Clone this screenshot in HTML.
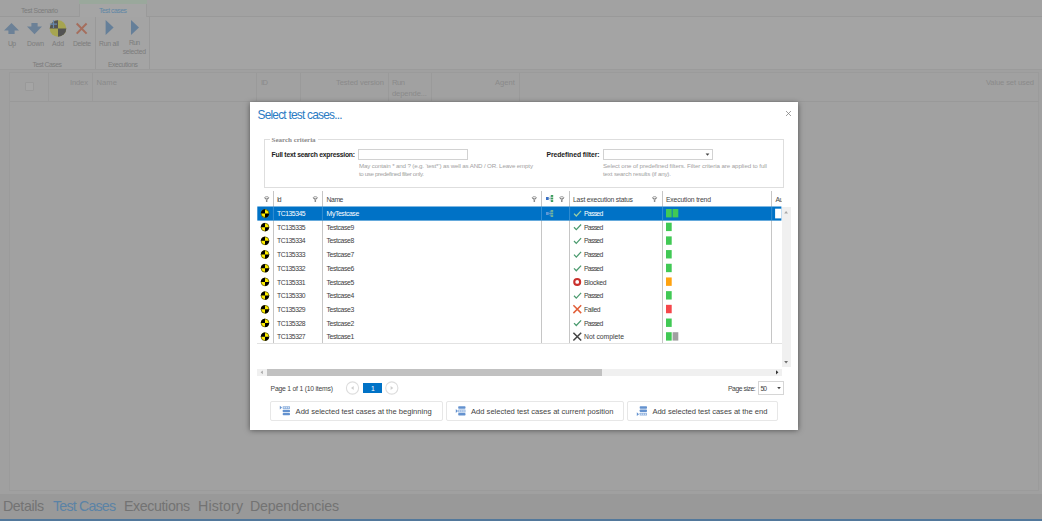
<!DOCTYPE html>
<html lang="en"><head><meta charset="utf-8"><title>Select test cases</title>
<style>
html,body{margin:0;padding:0;}
body{width:1042px;height:521px;overflow:hidden;background:#a0a0a0;position:relative;font-family:"Liberation Sans",sans-serif;}
#app,#modal,#mt{position:absolute;left:0;top:0;width:1042px;height:521px;overflow:hidden;}
.a{position:absolute;}
.t{position:absolute;white-space:nowrap;line-height:1;}
svg{position:absolute;overflow:visible;}

</style></head><body>
<div id="app">
<!-- top tab strip -->
<div class="a" style="left:0;top:0;width:1042px;height:16.5px;background:#a2a2a2"></div>
<div class="a" style="left:0;top:16px;width:1042px;height:1px;background:#999"></div>
<div class="a" style="left:79px;top:0;width:68px;height:17.2px;background:#a5a5a5;border-left:1px solid #9a9a9a;border-right:1px solid #9a9a9a;box-sizing:border-box"></div>
<div class="a" style="left:79px;top:0;width:68px;height:4px;background:#9aa89c"></div>
<!-- ribbon -->
<div class="a" style="left:0;top:17px;width:1042px;height:52px;background:#a4a4a4"></div>
<div class="a" style="left:0;top:69px;width:1042px;height:1px;background:#9b9b9b"></div>
<div class="a" style="left:95.2px;top:17px;width:0.8px;height:52px;background:#999"></div>
<div class="a" style="left:149px;top:17px;width:0.8px;height:52px;background:#999"></div>
<svg width="1042" height="521" viewBox="0 0 1042 521" style="left:0;top:0">
  <!-- up -->
  <path d="M11.5 23 L19 30.6 L14.6 30.6 L14.6 34 L8.4 34 L8.4 30.6 L4 30.6 Z" fill="#6c8197"/>
  <!-- down -->
  <path d="M31.4 23 L37.6 23 L37.6 26.6 L42 26.6 L34.5 34.2 L27 26.6 L31.4 26.6 Z" fill="#6c8197"/>
  <!-- add icon -->
  <circle cx="58" cy="28.5" r="8.3" fill="#a6a550"/>
  <path d="M58 28.5 L58 20.2 A8.3 8.3 0 0 0 49.7 28.5 Z" fill="#535353"/>
  <path d="M58 28.5 L58 36.8 A8.3 8.3 0 0 0 66.3 28.5 Z" fill="#535353"/>
  <path d="M53.5 20.2 V28 M49.9 24.2 H57" stroke="#6888aa" stroke-width="1.2" fill="none"/>
  <!-- delete -->
  <path d="M76.7 23.5 L86.6 33.6 M86.6 23.5 L76.7 33.6" stroke="#a56e5d" stroke-width="2" fill="none"/>
  <!-- play -->
  <path d="M105.6 20 L113.6 27.5 L105.6 35 Z" fill="#657f99"/>
  <path d="M131 20 L139 27.5 L131 35 Z" fill="#657f99"/>
</svg>
<!-- grid -->
<div class="a" style="left:9px;top:72.3px;width:1029.5px;height:418.7px;box-sizing:border-box;border:1px solid #9b9b9b;background:#a1a1a1"></div>
<div class="a" style="left:9.5px;top:100.8px;width:1029px;height:0.9px;background:#999"></div>
<div class="a" style="left:48px;top:73px;width:0.8px;height:28px;background:#9a9a9a"></div>
<div class="a" style="left:92px;top:73px;width:0.8px;height:28px;background:#9a9a9a"></div>
<div class="a" style="left:255.8px;top:73px;width:0.8px;height:28px;background:#9a9a9a"></div>
<div class="a" style="left:299.8px;top:73px;width:0.8px;height:28px;background:#9a9a9a"></div>
<div class="a" style="left:387.7px;top:73px;width:0.8px;height:28px;background:#9a9a9a"></div>
<div class="a" style="left:430.9px;top:73px;width:0.8px;height:28px;background:#9a9a9a"></div>
<div class="a" style="left:518.8px;top:73px;width:0.8px;height:28px;background:#9a9a9a"></div>
<div class="a" style="left:24.5px;top:82px;width:9px;height:8.6px;box-sizing:border-box;border:1px solid #999;border-radius:1px;background:#a5a5a5"></div>
<!-- bottom tabs -->
<div class="a" style="left:0;top:493.8px;width:1042px;height:25.2px;background:#999"></div>
<div class="a" style="left:0;top:518.8px;width:1042px;height:2.2px;background:#52789b"></div>

<span class="t" style='left:21.00px;top:8.00px;font-size:6.8px;color:#7c7c7c;font-family:"Liberation Sans", sans-serif;letter-spacing:-0.349px;'>Test Scenario</span>
<span class="t" style='left:99.00px;top:8.00px;font-size:6.8px;color:#5f86a6;font-family:"Liberation Sans", sans-serif;letter-spacing:-0.457px;'>Test cases</span>
<span class="t" style='left:8.00px;top:41.00px;font-size:6.8px;color:#7c7c7c;font-family:"Liberation Sans", sans-serif;letter-spacing:-0.703px;'>Up</span>
<span class="t" style='left:27.00px;top:41.00px;font-size:6.8px;color:#7c7c7c;font-family:"Liberation Sans", sans-serif;letter-spacing:-0.130px;'>Down</span>
<span class="t" style='left:52.00px;top:41.00px;font-size:6.8px;color:#7c7c7c;font-family:"Liberation Sans", sans-serif;letter-spacing:-0.047px;'>Add</span>
<span class="t" style='left:73.00px;top:41.00px;font-size:6.8px;color:#7c7c7c;font-family:"Liberation Sans", sans-serif;letter-spacing:-0.331px;'>Delete</span>
<span class="t" style='left:99.00px;top:41.00px;font-size:6.8px;color:#7c7c7c;font-family:"Liberation Sans", sans-serif;letter-spacing:-0.195px;'>Run all</span>
<span class="t" style='left:129.00px;top:40.00px;font-size:6.8px;color:#7c7c7c;font-family:"Liberation Sans", sans-serif;letter-spacing:-0.734px;'>Run</span>
<span class="t" style='left:122.70px;top:49.00px;font-size:6.8px;color:#7c7c7c;font-family:"Liberation Sans", sans-serif;letter-spacing:-0.290px;'>selected</span>
<span class="t" style='left:32.50px;top:62.00px;font-size:6.8px;color:#7c7c7c;font-family:"Liberation Sans", sans-serif;letter-spacing:-0.458px;'>Test Cases</span>
<span class="t" style='left:107.90px;top:62.00px;font-size:6.8px;color:#7c7c7c;font-family:"Liberation Sans", sans-serif;letter-spacing:-0.350px;'>Executions</span>
<span class="t" style='left:70.00px;top:79.00px;font-size:7.6px;color:#8a8a8a;font-family:"Liberation Sans", sans-serif;letter-spacing:-0.145px;'>Index</span>
<span class="t" style='left:96.50px;top:79.00px;font-size:7.6px;color:#8a8a8a;font-family:"Liberation Sans", sans-serif;letter-spacing:0.078px;'>Name</span>
<span class="t" style='left:261.00px;top:79.00px;font-size:7.6px;color:#8a8a8a;font-family:"Liberation Sans", sans-serif;letter-spacing:-0.594px;'>ID</span>
<span class="t" style='left:336.00px;top:79.00px;font-size:7.6px;color:#8a8a8a;font-family:"Liberation Sans", sans-serif;letter-spacing:-0.075px;'>Tested version</span>
<span class="t" style='left:392.00px;top:79.00px;font-size:7.6px;color:#8a8a8a;font-family:"Liberation Sans", sans-serif;letter-spacing:-0.469px;'>Run</span>
<span class="t" style='left:392.00px;top:90.00px;font-size:7.6px;color:#8a8a8a;font-family:"Liberation Sans", sans-serif;letter-spacing:-0.101px;'>depende...</span>
<span class="t" style='left:495.00px;top:79.00px;font-size:7.6px;color:#8a8a8a;font-family:"Liberation Sans", sans-serif;letter-spacing:0.035px;'>Agent</span>
<span class="t" style='left:986.00px;top:79.00px;font-size:7.6px;color:#8a8a8a;font-family:"Liberation Sans", sans-serif;letter-spacing:-0.130px;'>Value set used</span>
<span class="t" style='left:3.00px;top:499.00px;font-size:14.2px;color:#737373;font-family:"Liberation Sans", sans-serif;letter-spacing:-0.396px;'>Details</span>
<span class="t" style='left:53.00px;top:499.00px;font-size:14.2px;color:#5b83a6;font-family:"Liberation Sans", sans-serif;letter-spacing:-0.799px;'>Test Cases</span>
<span class="t" style='left:124.00px;top:499.00px;font-size:14.2px;color:#737373;font-family:"Liberation Sans", sans-serif;letter-spacing:-0.378px;'>Executions</span>
<span class="t" style='left:198.00px;top:499.00px;font-size:14.2px;color:#737373;font-family:"Liberation Sans", sans-serif;letter-spacing:0.141px;'>History</span>
<span class="t" style='left:250.00px;top:499.00px;font-size:14.2px;color:#737373;font-family:"Liberation Sans", sans-serif;letter-spacing:-0.156px;'>Dependencies</span>
</div>
<div id="modal">
<div class="a" style="left:250.3px;top:101.8px;width:547.4px;height:327.9px;background:#fff;box-shadow:0 1.2px 5.5px rgba(0,0,0,0.5)"></div>
<div class="a" style="left:264.2px;top:139.3px;width:519.6px;height:49px;box-sizing:border-box;border:1px solid #dedede"></div>
<div class="a" style="left:269.6px;top:136px;width:48px;height:7px;background:#fff"></div>
<div class="a" style="left:358.3px;top:149.2px;width:110px;height:11px;box-sizing:border-box;border:1px solid #d2d2d2;background:#fff"></div>
<div class="a" style="left:602.8px;top:149.2px;width:110px;height:11px;box-sizing:border-box;border:1px solid #d2d2d2;background:#fff"></div>
<div class="a" style="left:257.3px;top:343.1px;width:524.3px;height:0.8px;background:#e2e2e2"></div>
<div class="a" style="left:272.9px;top:190.6px;width:1px;height:152.6px;background:#c6c6c6"></div>
<div class="a" style="left:321.9px;top:190.6px;width:1px;height:152.6px;background:#c6c6c6"></div>
<div class="a" style="left:541.0px;top:190.6px;width:1px;height:152.6px;background:#c6c6c6"></div>
<div class="a" style="left:569.1px;top:190.6px;width:1px;height:152.6px;background:#c6c6c6"></div>
<div class="a" style="left:662.1px;top:190.6px;width:1px;height:152.6px;background:#c6c6c6"></div>
<div class="a" style="left:771.2px;top:190.6px;width:1px;height:152.6px;background:#c6c6c6"></div>
<div class="a" style="left:781.8px;top:206.7px;width:9px;height:160.7px;background:#f0f0f0"></div>
<div class="a" style="left:257.3px;top:368.7px;width:524.3px;height:7.3px;background:#f0f0f0"></div>
<div class="a" style="left:266.6px;top:368.7px;width:335.8px;height:7.3px;background:#c1c1c1"></div>
<div class="a" style="left:363px;top:383px;width:18.7px;height:9.8px;background:#0072c6"></div>
<div class="a" style="left:757.6px;top:381.4px;width:26.2px;height:13.2px;box-sizing:border-box;border:1px solid #d6d6d6;background:#fff"></div>
<div class="a" style="left:270.4px;top:401.3px;width:172.2px;height:19.3px;box-sizing:border-box;border:1px solid #e7e7e7;border-radius:2px;background:#fff"></div>
<div class="a" style="left:446.1px;top:401.3px;width:177.7px;height:19.3px;box-sizing:border-box;border:1px solid #e7e7e7;border-radius:2px;background:#fff"></div>
<div class="a" style="left:627.3px;top:401.3px;width:150.5px;height:19.3px;box-sizing:border-box;border:1px solid #e7e7e7;border-radius:2px;background:#fff"></div>
<svg width="1042" height="521" viewBox="0 0 1042 521" style="left:0;top:0">
<rect x="257.3" y="206.5" width="524.1" height="14.1" fill="#0072c6"/>
<rect x="272.9" y="206.5" width="1" height="14.1" fill="#fff" fill-opacity="0.2"/>
<rect x="321.9" y="206.5" width="1" height="14.1" fill="#fff" fill-opacity="0.2"/>
<rect x="541.0" y="206.5" width="1" height="14.1" fill="#fff" fill-opacity="0.2"/>
<rect x="569.1" y="206.5" width="1" height="14.1" fill="#fff" fill-opacity="0.2"/>
<rect x="662.1" y="206.5" width="1" height="14.1" fill="#fff" fill-opacity="0.2"/>
<rect x="771.2" y="206.5" width="1" height="14.1" fill="#fff" fill-opacity="0.2"/>
<rect x="775.1" y="208.7" width="6.3" height="9.7" fill="#fff"/>
<path d="M786 111 L791 116 M791 111 L786 116" stroke="#777" stroke-width="0.7" fill="none"/>
<path d="M705.6 153.6 L709.4 153.6 L707.5 155.8 Z" fill="#444"/>
<path d="M777.2 387 L780.8 387 L779 389.2 Z" fill="#444"/>
<g transform="translate(266.7 196.7)" stroke="#6e6e6e" stroke-width="0.7" fill="none"><ellipse cx="0" cy="1.0" rx="1.95" ry="1.0"/><path d="M-1.95 1.2 L-0.25 3.2 L-0.25 5.3 M1.95 1.2 L0.25 3.2 L0.25 5.3"/></g>
<g transform="translate(315.3 196.7)" stroke="#6e6e6e" stroke-width="0.7" fill="none"><ellipse cx="0" cy="1.0" rx="1.95" ry="1.0"/><path d="M-1.95 1.2 L-0.25 3.2 L-0.25 5.3 M1.95 1.2 L0.25 3.2 L0.25 5.3"/></g>
<g transform="translate(534.3 196.7)" stroke="#6e6e6e" stroke-width="0.7" fill="none"><ellipse cx="0" cy="1.0" rx="1.95" ry="1.0"/><path d="M-1.95 1.2 L-0.25 3.2 L-0.25 5.3 M1.95 1.2 L0.25 3.2 L0.25 5.3"/></g>
<g transform="translate(561.8 196.7)" stroke="#6e6e6e" stroke-width="0.7" fill="none"><ellipse cx="0" cy="1.0" rx="1.95" ry="1.0"/><path d="M-1.95 1.2 L-0.25 3.2 L-0.25 5.3 M1.95 1.2 L0.25 3.2 L0.25 5.3"/></g>
<g transform="translate(654.6 196.7)" stroke="#6e6e6e" stroke-width="0.7" fill="none"><ellipse cx="0" cy="1.0" rx="1.95" ry="1.0"/><path d="M-1.95 1.2 L-0.25 3.2 L-0.25 5.3 M1.95 1.2 L0.25 3.2 L0.25 5.3"/></g>
<g transform="translate(546 195)"><path d="M2.6 3.5 H5.4 M4.2 0.9 V6.1 M4.2 0.9 H5.4 M4.2 6.1 H5.4" stroke="#88aaaa" stroke-width="0.6" fill="none"/><rect x="0" y="2" width="2.7" height="3" fill="#3a6fc4"/><rect x="5" y="0" width="2.2" height="1.9" fill="#3c9d5c"/><rect x="5" y="2.55" width="2.2" height="1.9" fill="#3c9d5c"/><rect x="5" y="5.1" width="2.2" height="1.9" fill="#3c9d5c"/></g>
<g transform="translate(546 210)"><path d="M2.6 3.5 H5.4 M4.2 0.9 V6.1 M4.2 0.9 H5.4 M4.2 6.1 H5.4" stroke="#7fa8c8" stroke-width="0.6" fill="none"/><rect x="0" y="2" width="2.7" height="3" fill="#5f98d6"/><rect x="5" y="0" width="2.2" height="1.9" fill="#6fb39a"/><rect x="5" y="2.55" width="2.2" height="1.9" fill="#6fb39a"/><rect x="5" y="5.1" width="2.2" height="1.9" fill="#6fb39a"/></g>
<g transform="translate(265 213.45)"><circle r="4.15" fill="#ffee00"/><path d="M0 0 L0 -4.15 A4.15 4.15 0 0 0 -4.15 0 Z M0 0 L0 4.15 A4.15 4.15 0 0 0 4.15 0 Z" fill="#000"/><circle r="3.95" fill="none" stroke="#000" stroke-width="0.5"/></g>
<g transform="translate(265 227.14)"><circle r="4.15" fill="#ffee00"/><path d="M0 0 L0 -4.15 A4.15 4.15 0 0 0 -4.15 0 Z M0 0 L0 4.15 A4.15 4.15 0 0 0 4.15 0 Z" fill="#000"/><circle r="3.95" fill="none" stroke="#000" stroke-width="0.5"/></g>
<g transform="translate(265 240.83)"><circle r="4.15" fill="#ffee00"/><path d="M0 0 L0 -4.15 A4.15 4.15 0 0 0 -4.15 0 Z M0 0 L0 4.15 A4.15 4.15 0 0 0 4.15 0 Z" fill="#000"/><circle r="3.95" fill="none" stroke="#000" stroke-width="0.5"/></g>
<g transform="translate(265 254.52)"><circle r="4.15" fill="#ffee00"/><path d="M0 0 L0 -4.15 A4.15 4.15 0 0 0 -4.15 0 Z M0 0 L0 4.15 A4.15 4.15 0 0 0 4.15 0 Z" fill="#000"/><circle r="3.95" fill="none" stroke="#000" stroke-width="0.5"/></g>
<g transform="translate(265 268.21)"><circle r="4.15" fill="#ffee00"/><path d="M0 0 L0 -4.15 A4.15 4.15 0 0 0 -4.15 0 Z M0 0 L0 4.15 A4.15 4.15 0 0 0 4.15 0 Z" fill="#000"/><circle r="3.95" fill="none" stroke="#000" stroke-width="0.5"/></g>
<g transform="translate(265 281.90)"><circle r="4.15" fill="#ffee00"/><path d="M0 0 L0 -4.15 A4.15 4.15 0 0 0 -4.15 0 Z M0 0 L0 4.15 A4.15 4.15 0 0 0 4.15 0 Z" fill="#000"/><circle r="3.95" fill="none" stroke="#000" stroke-width="0.5"/></g>
<g transform="translate(265 295.59)"><circle r="4.15" fill="#ffee00"/><path d="M0 0 L0 -4.15 A4.15 4.15 0 0 0 -4.15 0 Z M0 0 L0 4.15 A4.15 4.15 0 0 0 4.15 0 Z" fill="#000"/><circle r="3.95" fill="none" stroke="#000" stroke-width="0.5"/></g>
<g transform="translate(265 309.28)"><circle r="4.15" fill="#ffee00"/><path d="M0 0 L0 -4.15 A4.15 4.15 0 0 0 -4.15 0 Z M0 0 L0 4.15 A4.15 4.15 0 0 0 4.15 0 Z" fill="#000"/><circle r="3.95" fill="none" stroke="#000" stroke-width="0.5"/></g>
<g transform="translate(265 322.97)"><circle r="4.15" fill="#ffee00"/><path d="M0 0 L0 -4.15 A4.15 4.15 0 0 0 -4.15 0 Z M0 0 L0 4.15 A4.15 4.15 0 0 0 4.15 0 Z" fill="#000"/><circle r="3.95" fill="none" stroke="#000" stroke-width="0.5"/></g>
<g transform="translate(265 336.66)"><circle r="4.15" fill="#ffee00"/><path d="M0 0 L0 -4.15 A4.15 4.15 0 0 0 -4.15 0 Z M0 0 L0 4.15 A4.15 4.15 0 0 0 4.15 0 Z" fill="#000"/><circle r="3.95" fill="none" stroke="#000" stroke-width="0.5"/></g>
<path d="M574 213.60 L576.3 216.00 L581.1 210.80" stroke="#9ccfa4" stroke-width="1.25" fill="none"/>
<path d="M574 227.29 L576.3 229.69 L581.1 224.49" stroke="#4a9a6e" stroke-width="1.25" fill="none"/>
<path d="M574 240.98 L576.3 243.38 L581.1 238.18" stroke="#4a9a6e" stroke-width="1.25" fill="none"/>
<path d="M574 254.67 L576.3 257.07 L581.1 251.87" stroke="#4a9a6e" stroke-width="1.25" fill="none"/>
<path d="M574 268.36 L576.3 270.76 L581.1 265.56" stroke="#4a9a6e" stroke-width="1.25" fill="none"/>
<circle cx="577.2" cy="281.95" r="2.95" fill="#fff" stroke="#c9302c" stroke-width="2.1"/>
<path d="M574 295.74 L576.3 298.14 L581.1 292.94" stroke="#4a9a6e" stroke-width="1.25" fill="none"/>
<path d="M573.4 305.33 L581.2 313.13 M581.2 305.33 L573.4 313.13" stroke="#e2603a" stroke-width="1.5" fill="none"/>
<path d="M574 323.12 L576.3 325.52 L581.1 320.32" stroke="#4a9a6e" stroke-width="1.25" fill="none"/>
<path d="M573.4 332.71 L581.2 340.51 M581.2 332.71 L573.4 340.51" stroke="#444" stroke-width="1.5" fill="none"/>
<rect x="666.0" y="209.00" width="5.7" height="8.4" fill="#41c955"/>
<rect x="672.6" y="209.00" width="5.7" height="8.4" fill="#41c955"/>
<rect x="666.0" y="222.69" width="5.7" height="8.4" fill="#41c955"/>
<rect x="666.0" y="236.38" width="5.7" height="8.4" fill="#41c955"/>
<rect x="666.0" y="250.07" width="5.7" height="8.4" fill="#41c955"/>
<rect x="666.0" y="263.76" width="5.7" height="8.4" fill="#41c955"/>
<rect x="666.0" y="277.45" width="5.7" height="8.4" fill="#ffa20f"/>
<rect x="666.0" y="291.14" width="5.7" height="8.4" fill="#41c955"/>
<rect x="666.0" y="304.83" width="5.7" height="8.4" fill="#f5474b"/>
<rect x="666.0" y="318.52" width="5.7" height="8.4" fill="#41c955"/>
<rect x="666.0" y="332.21" width="5.7" height="8.4" fill="#41c955"/>
<rect x="672.6" y="332.21" width="5.7" height="8.4" fill="#a0a0a0"/>
<path d="M784.2 213.4 L788 213.4 L786.1 211 Z" fill="#a8a8a8"/>
<path d="M784.2 361 L788 361 L786.1 363.4 Z" fill="#707070"/>
<path d="M262.8 370.4 L262.8 374.2 L260.6 372.3 Z" fill="#a8a8a8"/>
<path d="M776 370.2 L776 374.4 L778.4 372.3 Z" fill="#333"/>
<circle cx="352.5" cy="388" r="6.1" fill="#fff" stroke="#dddddd" stroke-width="1.1"/>
<path d="M353.70 386.1 L353.70 389.9 L351.00 388 Z" fill="#cfcfcf"/>
<circle cx="391.8" cy="388" r="6.1" fill="#fff" stroke="#dddddd" stroke-width="1.1"/>
<path d="M390.60 386.1 L390.60 389.9 L393.30 388 Z" fill="#cfcfcf"/>
<rect x="282.7" y="406.2" width="7.3" height="2.80" rx="0.4" fill="#8fb1de"/><rect x="283.60" y="406.90" width="1.3" height="1.40" fill="#d2e1f3"/><rect x="285.70" y="406.90" width="1.3" height="1.40" fill="#d2e1f3"/><rect x="287.80" y="406.90" width="1.3" height="1.40" fill="#d2e1f3"/><path d="M279.8 405.70 L282.0 407.60 L279.8 409.50 Z" fill="#6492cf"/><rect x="282.7" y="409.8" width="7.3" height="2.40" rx="0.7" fill="#6492cf"/><rect x="282.7" y="413" width="7.3" height="2.30" rx="0.7" fill="#6492cf"/>
<rect x="458.2" y="406.3" width="7.3" height="2.40" rx="0.7" fill="#6492cf"/><rect x="458.2" y="409.4" width="7.3" height="3.20" rx="0.4" fill="#8fb1de"/><rect x="459.10" y="410.10" width="1.3" height="1.80" fill="#d2e1f3"/><rect x="461.20" y="410.10" width="1.3" height="1.80" fill="#d2e1f3"/><rect x="463.30" y="410.10" width="1.3" height="1.80" fill="#d2e1f3"/><path d="M455.8 409.10 L458.0 411.00 L455.8 412.90 Z" fill="#6492cf"/><rect x="458.2" y="413.1" width="7.3" height="2.30" rx="0.7" fill="#6492cf"/>
<rect x="639.7" y="406.3" width="7.3" height="2.50" rx="0.7" fill="#6492cf"/><rect x="639.7" y="409.5" width="7.3" height="2.50" rx="0.7" fill="#6492cf"/><rect x="639.7" y="412.8" width="7.3" height="2.80" rx="0.4" fill="#8fb1de"/><rect x="640.60" y="413.50" width="1.3" height="1.40" fill="#d2e1f3"/><rect x="642.70" y="413.50" width="1.3" height="1.40" fill="#d2e1f3"/><rect x="644.80" y="413.50" width="1.3" height="1.40" fill="#d2e1f3"/><path d="M636.8 412.30 L639.0 414.20 L636.8 416.10 Z" fill="#6492cf"/>
</svg>

</div>
<div id="mt">
<span class="t" style='left:257.50px;top:110.00px;font-size:11.9px;color:#2a7bc3;font-family:"Liberation Sans", sans-serif;letter-spacing:-0.779px;'>Select test cases...</span>
<span class="t" style='left:271.60px;top:137.00px;font-size:7.0px;color:#8c8c8c;font-family:"Liberation Serif", serif;font-weight:bold;letter-spacing:-0.028px;'>Search criteria</span>
<span class="t" style='left:271.60px;top:152.00px;font-size:6.8px;color:#222;font-family:"Liberation Sans", sans-serif;font-weight:bold;letter-spacing:-0.241px;'>Full text search expression:</span>
<span class="t" style='left:546.50px;top:152.00px;font-size:6.8px;color:#222;font-family:"Liberation Sans", sans-serif;font-weight:bold;letter-spacing:-0.060px;'>Predefined filter:</span>
<span class="t" style='left:359.00px;top:163.00px;font-size:6.2px;color:#a2a2a2;font-family:"Liberation Sans", sans-serif;letter-spacing:-0.157px;'>May contain * and ? (e.g. ‘test*’) as well as AND / OR. Leave empty</span>
<span class="t" style='left:359.00px;top:171.00px;font-size:6.2px;color:#a2a2a2;font-family:"Liberation Sans", sans-serif;letter-spacing:-0.364px;'>to use predefined filter only.</span>
<span class="t" style='left:603.00px;top:163.00px;font-size:6.2px;color:#a2a2a2;font-family:"Liberation Sans", sans-serif;letter-spacing:-0.087px;'>Select one of predefined filters. Filter criteria are applied to full</span>
<span class="t" style='left:603.00px;top:171.00px;font-size:6.2px;color:#a2a2a2;font-family:"Liberation Sans", sans-serif;letter-spacing:-0.163px;'>text search results (if any).</span>
<span class="t" style='left:277.00px;top:197.00px;font-size:6.8px;color:#444;font-family:"Liberation Sans", sans-serif;letter-spacing:-1.172px;'>Id</span>
<span class="t" style='left:326.60px;top:197.00px;font-size:6.8px;color:#444;font-family:"Liberation Sans", sans-serif;letter-spacing:-0.447px;'>Name</span>
<span class="t" style='left:573.00px;top:197.00px;font-size:6.8px;color:#444;font-family:"Liberation Sans", sans-serif;letter-spacing:-0.193px;'>Last execution status</span>
<span class="t" style='left:666.00px;top:197.00px;font-size:6.8px;color:#444;font-family:"Liberation Sans", sans-serif;letter-spacing:-0.160px;'>Execution trend</span>
<span class="t" style='left:775.40px;top:197.00px;font-size:6.8px;color:#444;font-family:"Liberation Sans", sans-serif;letter-spacing:-0.328px;'>Au</span>
<span class="t" style='left:277.00px;top:211.00px;font-size:6.8px;color:#fff;font-family:"Liberation Sans", sans-serif;letter-spacing:-0.450px;'>TC135345</span>
<span class="t" style='left:326.60px;top:211.00px;font-size:6.8px;color:#fff;font-family:"Liberation Sans", sans-serif;letter-spacing:-0.366px;'>MyTestcase</span>
<span class="t" style='left:584.00px;top:211.00px;font-size:6.8px;color:#fff;font-family:"Liberation Sans", sans-serif;letter-spacing:-0.694px;'>Passed</span>
<span class="t" style='left:277.00px;top:225.00px;font-size:6.8px;color:#3c3c3c;font-family:"Liberation Sans", sans-serif;letter-spacing:-0.450px;'>TC135335</span>
<span class="t" style='left:326.60px;top:225.00px;font-size:6.8px;color:#3c3c3c;font-family:"Liberation Sans", sans-serif;letter-spacing:-0.376px;'>Testcase9</span>
<span class="t" style='left:584.00px;top:225.00px;font-size:6.8px;color:#3c3c3c;font-family:"Liberation Sans", sans-serif;letter-spacing:-0.694px;'>Passed</span>
<span class="t" style='left:277.00px;top:238.00px;font-size:6.8px;color:#3c3c3c;font-family:"Liberation Sans", sans-serif;letter-spacing:-0.450px;'>TC135334</span>
<span class="t" style='left:326.60px;top:238.00px;font-size:6.8px;color:#3c3c3c;font-family:"Liberation Sans", sans-serif;letter-spacing:-0.376px;'>Testcase8</span>
<span class="t" style='left:584.00px;top:238.00px;font-size:6.8px;color:#3c3c3c;font-family:"Liberation Sans", sans-serif;letter-spacing:-0.694px;'>Passed</span>
<span class="t" style='left:277.00px;top:252.00px;font-size:6.8px;color:#3c3c3c;font-family:"Liberation Sans", sans-serif;letter-spacing:-0.450px;'>TC135333</span>
<span class="t" style='left:326.60px;top:252.00px;font-size:6.8px;color:#3c3c3c;font-family:"Liberation Sans", sans-serif;letter-spacing:-0.376px;'>Testcase7</span>
<span class="t" style='left:584.00px;top:252.00px;font-size:6.8px;color:#3c3c3c;font-family:"Liberation Sans", sans-serif;letter-spacing:-0.694px;'>Passed</span>
<span class="t" style='left:277.00px;top:266.00px;font-size:6.8px;color:#3c3c3c;font-family:"Liberation Sans", sans-serif;letter-spacing:-0.450px;'>TC135332</span>
<span class="t" style='left:326.60px;top:266.00px;font-size:6.8px;color:#3c3c3c;font-family:"Liberation Sans", sans-serif;letter-spacing:-0.376px;'>Testcase6</span>
<span class="t" style='left:584.00px;top:266.00px;font-size:6.8px;color:#3c3c3c;font-family:"Liberation Sans", sans-serif;letter-spacing:-0.694px;'>Passed</span>
<span class="t" style='left:277.00px;top:280.00px;font-size:6.8px;color:#3c3c3c;font-family:"Liberation Sans", sans-serif;letter-spacing:-0.450px;'>TC135331</span>
<span class="t" style='left:326.60px;top:280.00px;font-size:6.8px;color:#3c3c3c;font-family:"Liberation Sans", sans-serif;letter-spacing:-0.376px;'>Testcase5</span>
<span class="t" style='left:584.00px;top:280.00px;font-size:6.8px;color:#3c3c3c;font-family:"Liberation Sans", sans-serif;letter-spacing:-0.265px;'>Blocked</span>
<span class="t" style='left:277.00px;top:293.00px;font-size:6.8px;color:#3c3c3c;font-family:"Liberation Sans", sans-serif;letter-spacing:-0.450px;'>TC135330</span>
<span class="t" style='left:326.60px;top:293.00px;font-size:6.8px;color:#3c3c3c;font-family:"Liberation Sans", sans-serif;letter-spacing:-0.376px;'>Testcase4</span>
<span class="t" style='left:584.00px;top:293.00px;font-size:6.8px;color:#3c3c3c;font-family:"Liberation Sans", sans-serif;letter-spacing:-0.694px;'>Passed</span>
<span class="t" style='left:277.00px;top:307.00px;font-size:6.8px;color:#3c3c3c;font-family:"Liberation Sans", sans-serif;letter-spacing:-0.450px;'>TC135329</span>
<span class="t" style='left:326.60px;top:307.00px;font-size:6.8px;color:#3c3c3c;font-family:"Liberation Sans", sans-serif;letter-spacing:-0.376px;'>Testcase3</span>
<span class="t" style='left:584.00px;top:307.00px;font-size:6.8px;color:#3c3c3c;font-family:"Liberation Sans", sans-serif;letter-spacing:-0.383px;'>Failed</span>
<span class="t" style='left:277.00px;top:321.00px;font-size:6.8px;color:#3c3c3c;font-family:"Liberation Sans", sans-serif;letter-spacing:-0.450px;'>TC135328</span>
<span class="t" style='left:326.60px;top:321.00px;font-size:6.8px;color:#3c3c3c;font-family:"Liberation Sans", sans-serif;letter-spacing:-0.376px;'>Testcase2</span>
<span class="t" style='left:584.00px;top:321.00px;font-size:6.8px;color:#3c3c3c;font-family:"Liberation Sans", sans-serif;letter-spacing:-0.694px;'>Passed</span>
<span class="t" style='left:277.00px;top:334.00px;font-size:6.8px;color:#3c3c3c;font-family:"Liberation Sans", sans-serif;letter-spacing:-0.450px;'>TC135327</span>
<span class="t" style='left:326.60px;top:334.00px;font-size:6.8px;color:#3c3c3c;font-family:"Liberation Sans", sans-serif;letter-spacing:-0.376px;'>Testcase1</span>
<span class="t" style='left:584.00px;top:334.00px;font-size:6.8px;color:#3c3c3c;font-family:"Liberation Sans", sans-serif;letter-spacing:-0.004px;'>Not complete</span>
<span class="t" style='left:270.60px;top:386.00px;font-size:6.8px;color:#444;font-family:"Liberation Sans", sans-serif;letter-spacing:-0.213px;'>Page 1 of 1 (10 items)</span>
<span class="t" style='left:370.90px;top:386.00px;font-size:6.8px;color:#fff;font-family:"Liberation Sans", sans-serif;letter-spacing:-0.581px;'>1</span>
<span class="t" style='left:728.00px;top:386.00px;font-size:6.8px;color:#444;font-family:"Liberation Sans", sans-serif;letter-spacing:-0.461px;'>Page size:</span>
<span class="t" style='left:760.50px;top:386.00px;font-size:6.8px;color:#444;font-family:"Liberation Sans", sans-serif;letter-spacing:-1.062px;'>50</span>
<span class="t" style='left:295.60px;top:408.00px;font-size:7.6px;color:#444;font-family:"Liberation Sans", sans-serif;letter-spacing:-0.009px;'>Add selected test cases at the beginning</span>
<span class="t" style='left:471.00px;top:408.00px;font-size:7.6px;color:#444;font-family:"Liberation Sans", sans-serif;letter-spacing:-0.007px;'>Add selected test cases at current position</span>
<span class="t" style='left:652.40px;top:408.00px;font-size:7.6px;color:#444;font-family:"Liberation Sans", sans-serif;letter-spacing:-0.033px;'>Add selected test cases at the end</span>
<div class="a" style="left:781.6px;top:194px;width:6px;height:10px;background:#fff"></div>
</div>
</body></html>
